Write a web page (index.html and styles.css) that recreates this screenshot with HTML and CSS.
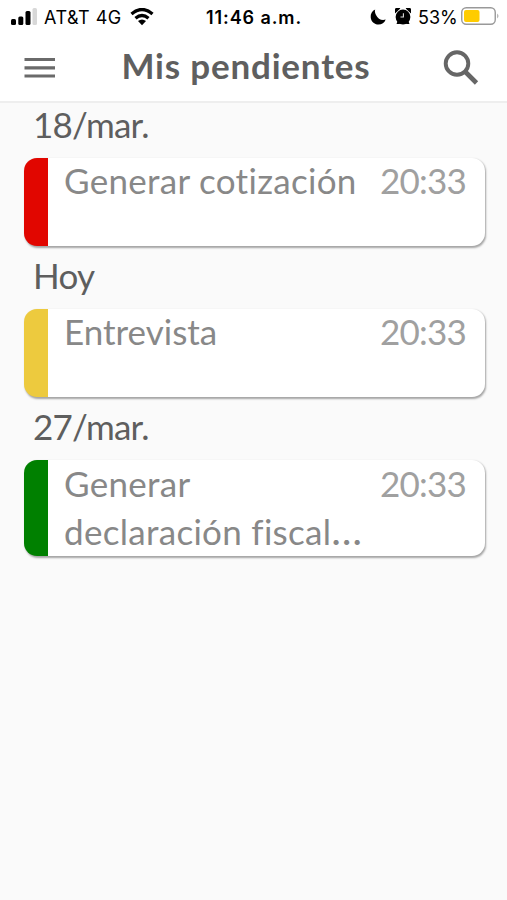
FILE: index.html
```
<!DOCTYPE html>
<html lang="es">
<head>
<meta charset="utf-8">
<meta name="viewport" content="width=device-width, initial-scale=1">
<title>Mis pendientes</title>
<link rel="stylesheet" href="styles.css">
</head>
<body>
<header class="top">
  <div class="status">
    <div class="status-left">
      <svg class="signal" width="26" height="18" viewBox="0 0 26 18">
        <rect x="0" y="11" width="5" height="6" rx="1.5"/><rect x="7.3" y="8.5" width="5" height="8.5" rx="1.5"/><rect x="14.5" y="3" width="5" height="14" rx="1.5"/><rect class="dim" x="21.5" y="0" width="4.5" height="17" rx="1.5"/>
      </svg>
      <span class="carrier">AT&amp;T 4G</span>
      <svg class="wifi" width="24" height="18" viewBox="0 0 24 18">
        <path d="M1.5 6Q12-3 22.500 6M5.500 10.300Q12 4.700 18.500 10.300" fill="none" stroke="#000" stroke-width="3.300"/>
        <path d="M8 13Q12 10 16 13L12 17.300Z"/>
      </svg>
    </div>
    <span class="clock">11:46 a.m.</span>
    <div class="status-right">
      <svg class="moon" width="16" height="16" viewBox="0 0 16 16"><path d="M5.200.500C2 2 .400 4.800 .700 8.200 1 12.500 4.300 15.500 8.500 15.500 11.800 15.500 14.500 13.800 15.700 10.500 12 12 7.800 10 6 6 5 4 4.500 2 5.200 .500Z"/></svg>
      <svg class="alarm" width="16" height="17" viewBox="0 0 16 17">
        <circle cx="8" cy="9" r="7.400"/><path d="M.300 5.300A3 3 0 0 1 5.300.500ZM10.700.500A3 3 0 0 1 15.700 5.300ZM1.500 16L3 12H13L14.500 16H12L8 15 4 16Z"/>
        <path d="M8.400 5.200V9H5.500" fill="none" stroke="#ddd" stroke-width="1.100"/>
      </svg>
      <span class="percent">53%</span>
      <svg class="battery" width="39" height="19" viewBox="0 0 39 19">
        <rect x=".75" y=".75" width="33.500" height="16.500" rx="4.500" fill="#fff" stroke="#999" stroke-width="1.400"/>
        <rect x="3" y="3" width="15.500" height="12" rx="2" fill="#fc0"/>
        <path d="M36.300 6.500Q38.500 9 36.300 11.500Z" fill="#999"/>
      </svg>
    </div>
  </div>
  <div class="bar">
    <svg class="menu" width="31" height="22" viewBox="0 0 31 22"><path d="M.5 2.500H31M.5 10.800H31M.5 19H31" stroke="#6a6a6a" stroke-width="3.200"/></svg>
    <h1 class="title">Mis pendientes</h1>
    <svg class="search" width="36" height="36" viewBox="0 0 36 36" fill="none" stroke="#666"><circle cx="14" cy="13.500" r="11.300" stroke-width="3.900"/><path d="M22 21.500L33.500 33" stroke-width="4.600"/></svg>
  </div>
</header>
<main class="list">
  <section>
    <h2 class="day">18/mar.</h2>
    <article class="card red"><p class="task">Generar cotización</p><time class="time">20:33</time></article>
  </section>
  <section>
    <h2 class="day today">Hoy</h2>
    <article class="card yellow"><p class="task entrevista">Entrevista</p><time class="time">20:33</time></article>
  </section>
  <section>
    <h2 class="day">27/mar.</h2>
    <article class="card green tall"><p class="task">Generar<br>declaración fiscal<span class="more">…</span></p><time class="time">20:33</time></article>
  </section>
</main>
</body>
</html>
```
FILE: styles.css
```
* { box-sizing: border-box; }
body { margin: 0; min-height: 900px; background: #fafafa; font-family: Lato, "Open Sans", sans-serif; font-variant-ligatures: none; }
svg { display: block; flex: none; }
h1, h2, p { margin: 0; }
.top { height: 103px; background: #fff; border-bottom: 2px solid #eee; }
.status { height: 34px; display: grid; grid-template-columns: 206px 1fr 137px; font: 400 18px/35px Inter, sans-serif; color: #000; white-space: nowrap; }
.status-left, .status-right { display: flex; align-items: flex-start; }
.status-left { padding-left: 11px; }
.signal { margin-top: 8px; }
.signal .dim { fill: #d8d8d8; }
.carrier { width: 86px; margin-left: 7px; letter-spacing: .5px; }
.wifi { margin-top: 8px; }
.clock { font-weight: 600; letter-spacing: .9px; }
.moon { margin-top: 9px; }
.alarm { margin: 8px 0 0 9px; }
.percent { width: 43px; margin-left: 7px; letter-spacing: 0; }
.battery { margin-top: 7px; }
.bar { height: 67px; padding: 0 28px 0 24px; display: flex; align-items: center; justify-content: space-between; }
.menu { margin-top: 1px; }
.title { font-size: 35px; line-height: 48px; font-weight: 700; color: #5f5f5f; white-space: nowrap; letter-spacing: .8px; margin: 0 6px 5px 0; }
.list { padding: 0 22px 0 24px; }
.day { height: 55px; padding: 0 0 0 9px; font-size: 35px; line-height: 42px; font-weight: 400; color: #5e5e5e; letter-spacing: -.8px; }
section + section .day { height: 63px; padding-top: 8px; }
section + section .today { letter-spacing: -.7px; padding-top: 8px; }
.card { height: 88px; border-left: 24px solid; border-radius: 13px; background: #fff; box-shadow: 1px 1.5px 2px rgba(0,0,0,.34); display: flex; justify-content: space-between; padding: 0 19px 0 16px; font-size: 35px; line-height: 45px; white-space: nowrap; }
.tall { height: 96px; line-height: 48px; }
.tall .task, .tall .time { margin-top: -1px; }
.red { border-left-color: #e10600; }
.yellow { border-left-color: #edca3e; }
.green { border-left-color: #008000; }
.task { color: #888; letter-spacing: .3px; }
.entrevista { letter-spacing: 0; }
.more { font-size: 41px; line-height: 0; }
.time { color: #a0a0a0; letter-spacing: -.8px; }
```
